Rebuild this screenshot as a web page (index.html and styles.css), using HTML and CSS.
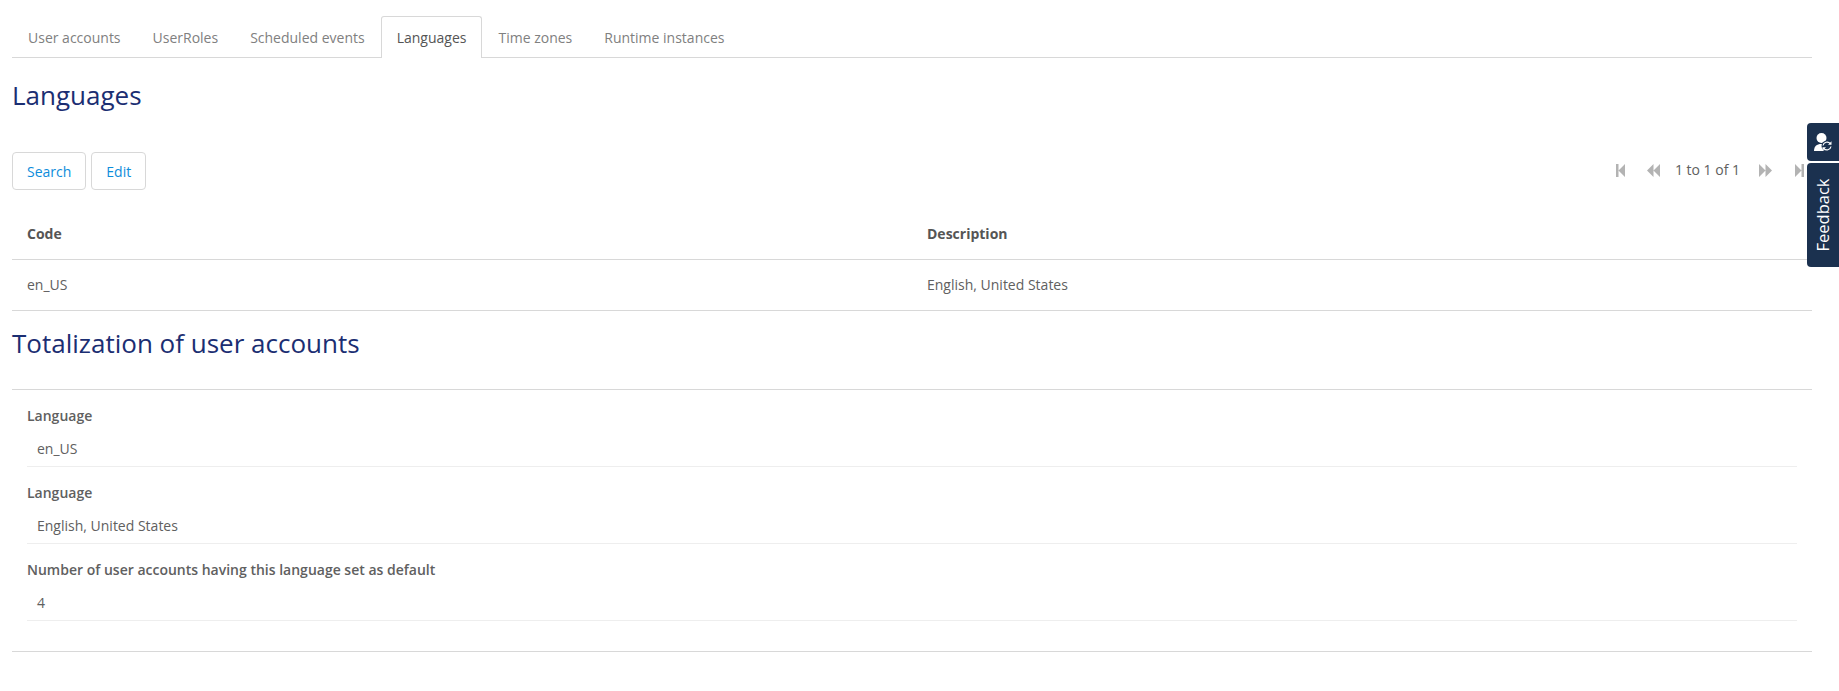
FILE: index.html
```html
<!DOCTYPE html>
<html lang="en">
<head>
    <meta charset="utf-8">
    <title>Languages</title>
    <link rel="stylesheet" href="styles.css">
</head>
<body>
    <ul class="tabs">
        <li><a>User accounts</a></li>
        <li><a>UserRoles</a></li>
        <li><a>Scheduled events</a></li>
        <li class="active"><a>Languages</a></li>
        <li><a>Time zones</a></li>
        <li><a>Runtime instances</a></li>
    </ul>

    <h2 class="title">Languages</h2>

    <div class="toolbar">
        <div class="buttons">
            <button class="btn">Search</button>
            <button class="btn">Edit</button>
        </div>
        <div class="pager">
            <svg class="pg" width="9" height="13" viewBox="0 0 9 13"><path d="M0 0h2.500v13H0zM9 0v13L2.500 6.500z"/></svg>
            <svg class="pg pg-prev" width="13" height="13" viewBox="0 0 13 13"><path d="M6.500 0v13L0 6.500zM13 0v13L6.500 6.500z"/></svg>
            <span class="pg-text">1 to 1 of 1</span>
            <svg class="pg" width="13" height="13" viewBox="0 0 13 13"><path d="M0 0v13l6.500-6.500zM6.500 0v13L13 6.500z"/></svg>
            <svg class="pg pg-last" width="9" height="13" viewBox="0 0 9 13"><path d="M0 0v13l6.500-6.500zM6.500 0H9v13H6.500z"/></svg>
        </div>
    </div>

    <table class="grid">
        <thead>
            <tr><th>Code</th><th>Description</th></tr>
        </thead>
        <tbody>
            <tr><td>en_US</td><td>English, United States</td></tr>
        </tbody>
    </table>

    <h2 class="title title-total">Totalization of user accounts</h2>

    <div class="details">
        <div class="field">
            <label>Language</label>
            <div class="value">en_US</div>
        </div>
        <div class="field">
            <label>Language</label>
            <div class="value">English, United States</div>
        </div>
        <div class="field">
            <label>Number of user accounts having this language set as default</label>
            <div class="value">4</div>
        </div>
    </div>

    <div class="side">
        <div class="side-user">
            <svg width="18" height="18" viewBox="0 0 18 18">
                <circle cx="7.500" cy="5" r="5" fill="#fff"/>
                <path d="M0 18c0-4.500 2.500-7 7.500-7s7.500 2.500 7.500 7z" fill="#fff"/>
                <circle cx="13" cy="13" r="5.500" fill="#1b314f"/>
                <path d="M9 12.500a4.100 4.100 0 0 1 7.300-1.800M17 13.500a4.100 4.100 0 0 1-7.300 1.800" fill="none" stroke="#fff" stroke-width="1.200"/>
                <path d="M17.500 8.300v3.500H14zM8.500 17.700v-3.500H12z" fill="#fff"/>
            </svg>
        </div>
        <div class="side-feedback"><span>Feedback</span></div>
    </div>
</body>
</html>
```

FILE: styles.css
```css
* {
    box-sizing: border-box;
}

body {
    margin: 0;
    padding: 16px 27px 0 12px;
    background: #fff;
    color: #606060;
    font-family: "Open Sans", sans-serif;
    font-size: 14px;
    line-height: 20px;
}

.tabs {
    display: flex;
    margin: 0;
    padding: 0;
    list-style: none;
    border-bottom: 1px solid #d8d8d8;
}

.tabs li {
    margin-bottom: -1px;
}

.tabs a {
    display: block;
    height: 42px;
    padding: 11px 15px 0;
    color: #808080;
    border: 1px solid transparent;
    border-bottom: 0;
}

.tabs .active a {
    color: #555;
    background: #fff;
    border-color: #d8d8d8;
    border-radius: 3px 3px 0 0;
}

.title {
    margin: 20px 0 0;
    color: #1b2e72;
    font-size: 26px;
    font-weight: 400;
    line-height: 34px;
}

.toolbar {
    display: flex;
    justify-content: space-between;
    align-items: center;
    margin-top: 40px;
}

.buttons {
    display: flex;
    gap: 5px;
}

.btn {
    height: 38px;
    padding: 0 14px;
    background: #fff;
    color: #0d8ddb;
    border: 1px solid #d8d8d8;
    border-radius: 4px;
    font-family: inherit;
    font-size: 14px;
}

.pager {
    display: flex;
    align-items: center;
    margin: -2px 8px 0 0;
}

.pg {
    fill: #b3b3b3;
}

.pg-prev {
    margin-left: 22px;
}

.pg-text {
    margin: 0 19px 0 15px;
}

.pg-last {
    margin-left: 23px;
}

.grid {
    width: 100%;
    margin-top: 10px;
    border-collapse: collapse;
    table-layout: fixed;
}

.grid th {
    height: 59px;
    padding: 10px 15px 0;
    color: #555;
    text-align: left;
    font-weight: 700;
    border-bottom: 1px solid #d8d8d8;
}

.grid td {
    height: 51px;
    padding: 0 15px;
    border-bottom: 1px solid #d8d8d8;
}

.title-total {
    margin-top: 15px;
}

.details {
    margin-top: 29px;
    padding: 12px 15px 18px;
    border-top: 1px solid #d8d8d8;
    border-bottom: 1px solid #d8d8d8;
}

.field {
    height: 65px;
    margin-bottom: 12px;
    border-bottom: 1px solid #eee;
}

.field label {
    display: block;
    padding-top: 4px;
    font-weight: 600;
}

.value {
    padding: 13px 10px 0;
}

.side {
    position: fixed;
    top: 123px;
    right: 0;
    width: 32px;
}

.side-user,
.side-feedback {
    display: flex;
    align-items: center;
    justify-content: center;
    background: #1b314f;
    color: #fff;
    border-radius: 4px 0 0 4px;
}

.side-user {
    height: 38px;
}

.side-feedback {
    height: 104px;
    margin-top: 2px;
}

.side-feedback span {
    transform: rotate(-90deg);
    font-size: 16.500px;
    font-weight: 500;
    white-space: nowrap;
}
```
